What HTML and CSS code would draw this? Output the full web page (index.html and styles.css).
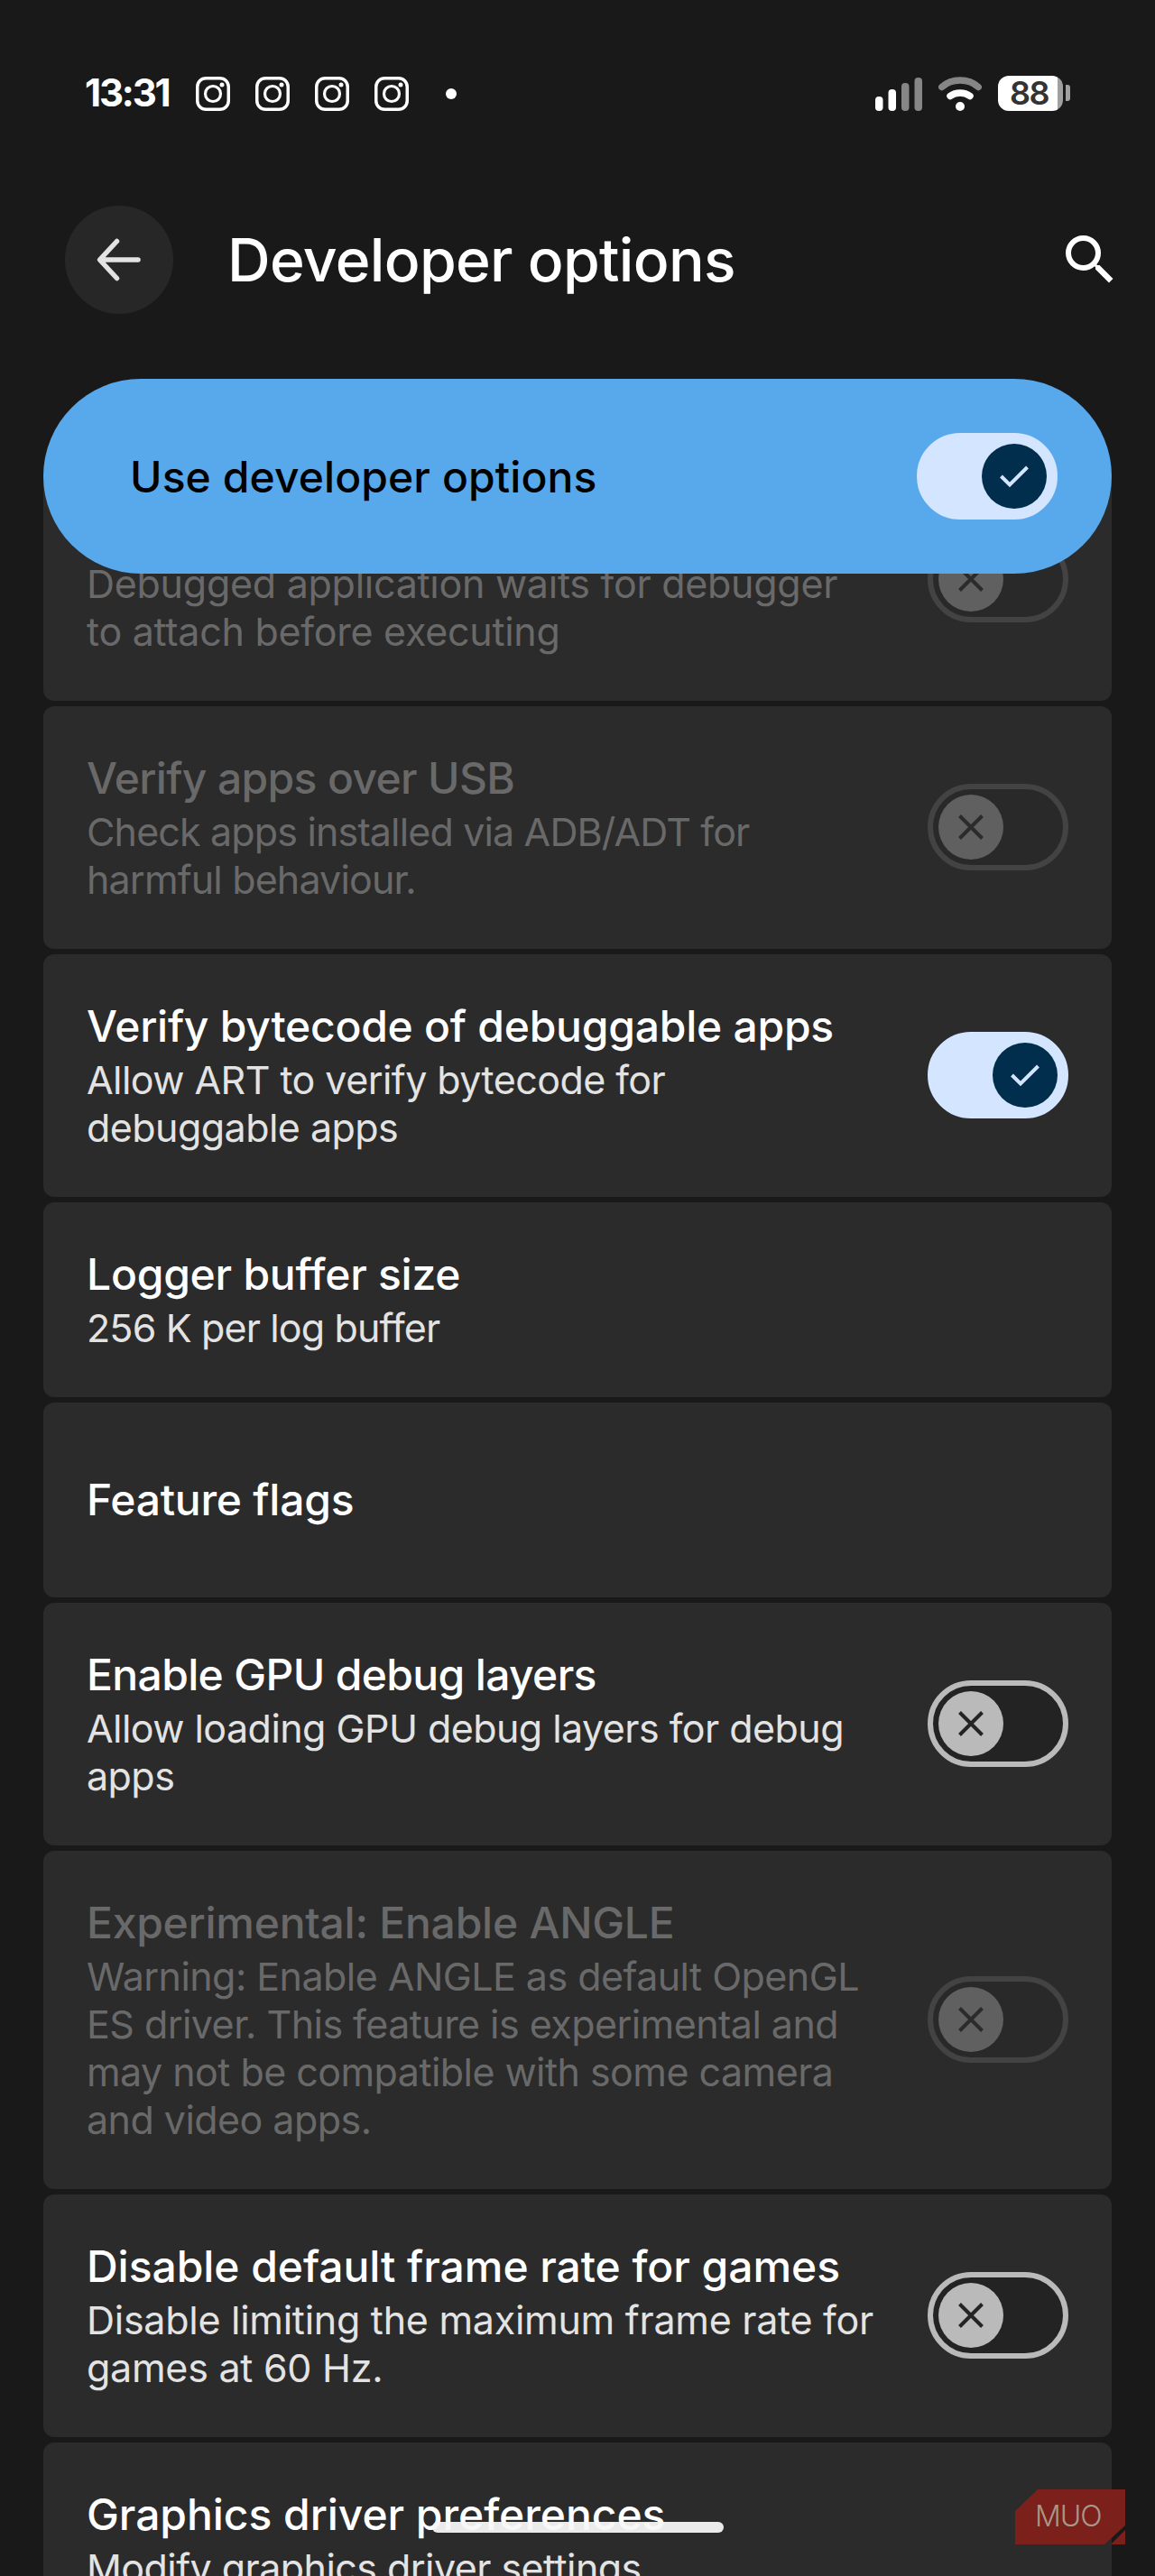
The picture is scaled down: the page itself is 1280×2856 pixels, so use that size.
FILE: index.html
```html
<!DOCTYPE html>
<html lang="en">
<head>
  <meta charset="UTF-8">
  <title>Developer options</title>
  <link rel="stylesheet" href="styles.css">
</head>
<body>

  <!-- shared icons -->
  <svg class="sprite" aria-hidden="true">
    <symbol id="insta" viewBox="0 0 38 38">
      <rect x="1.75" y="1.75" width="34.5" height="34.5" rx="9.5" fill="none" stroke="#fff" stroke-width="3.5"/>
      <circle cx="19" cy="19" r="8.5" fill="none" stroke="#fff" stroke-width="3.2"/>
      <circle cx="29" cy="9" r="2.5" fill="#fff"/>
    </symbol>
    <symbol id="check" viewBox="0 0 72 72">
      <path d="M21.5 36 31 45.5 50.5 26" fill="none" stroke="currentColor" stroke-width="4"/>
    </symbol>
    <symbol id="cross" viewBox="0 0 72 72">
      <path d="M23.5 23.5l25 25M48.5 23.5l-25 25" fill="none" stroke="currentColor" stroke-width="4"/>
    </symbol>
  </svg>

  <div class="status-bar">
    <span class="time">13:31</span>
    <div class="notifications">
      <svg class="insta"><use href="#insta"/></svg>
      <svg class="insta"><use href="#insta"/></svg>
      <svg class="insta"><use href="#insta"/></svg>
      <svg class="insta"><use href="#insta"/></svg>
      <span class="dot"></span>
    </div>
    <div class="system-icons">
      <svg class="signal" viewBox="0 0 52 38">
        <rect x="0" y="22" width="8.5" height="16" rx="4" fill="#fff"/>
        <rect x="14.5" y="14" width="8.5" height="24" rx="4" fill="#fff"/>
        <rect x="29" y="7" width="8.5" height="31" rx="4" fill="#868686"/>
        <rect x="43.5" y="1" width="8.5" height="37" rx="4" fill="#868686"/>
      </svg>
      <svg class="wifi" viewBox="0 0 48 38">
        <path d="M3.8 11.5C15 1.6 33 1.6 44.2 11.5" fill="none" stroke="#868686" stroke-width="7.5" stroke-linecap="round"/>
        <path d="M13 21.5C19 16.8 29 16.8 35 21.5" fill="none" stroke="#fff" stroke-width="7.5" stroke-linecap="round"/>
        <circle cx="24" cy="33" r="5" fill="#fff"/>
      </svg>
      <div class="battery">
        <span class="battery-level">88</span>
        <span class="battery-tip"></span>
      </div>
    </div>
  </div>

  <header class="app-bar">
    <button class="back-btn">
      <svg width="72" height="72" viewBox="0 0 72 72">
        <path d="M57 36H15M33.5 15.5 14.5 36 33.5 56.5" fill="none" stroke="#e3e3e3" stroke-width="5.5" stroke-linecap="round" stroke-linejoin="round"/>
      </svg>
    </button>
    <h1>Developer options</h1>
    <svg class="search" viewBox="0 0 24 24">
      <path fill="#fff" d="M15.5 14h-.79l-.28-.27A6.471 6.471 0 0 0 16 9.5 6.5 6.5 0 1 0 9.5 16c1.61 0 3.09-.59 4.23-1.57l.27.28v.79l5 4.99L20.49 19l-4.99-5zm-6 0C7.01 14 5 11.99 5 9.5S7.01 5 9.5 5 14 7.01 14 9.5 11.99 14 9.5 14z"/>
    </svg>
  </header>

  <div class="main-switch">
    <span>Use developer options</span>
    <div class="toggle on"><svg class="thumb"><use href="#check"/></svg></div>
  </div>

  <main class="list">
    <div class="item disabled">
      <div class="text">
        <h2>Wait for debugger</h2>
        <p class="loose">Debugged application waits for debugger<br>to attach before executing</p>
      </div>
      <div class="toggle"><svg class="thumb"><use href="#cross"/></svg></div>
    </div>

    <div class="item disabled">
      <div class="text">
        <h2 class="tight">Verify apps over USB</h2>
        <p class="tight">Check apps installed via ADB/ADT for<br>harmful behaviour.</p>
      </div>
      <div class="toggle"><svg class="thumb"><use href="#cross"/></svg></div>
    </div>

    <div class="item">
      <div class="text">
        <h2>Verify bytecode of debuggable apps</h2>
        <p>Allow ART to verify bytecode for<br>debuggable apps</p>
      </div>
      <div class="toggle on"><svg class="thumb"><use href="#check"/></svg></div>
    </div>

    <div class="item">
      <div class="text">
        <h2>Logger buffer size</h2>
        <p class="tight">256 K per log buffer</p>
      </div>
    </div>

    <div class="item">
      <div class="text">
        <h2>Feature flags</h2>
      </div>
    </div>

    <div class="item">
      <div class="text">
        <h2 class="tight">Enable GPU debug layers</h2>
        <p>Allow loading GPU debug layers for debug<br>apps</p>
      </div>
      <div class="toggle"><svg class="thumb"><use href="#cross"/></svg></div>
    </div>

    <div class="item disabled">
      <div class="text">
        <h2>Experimental: Enable ANGLE</h2>
        <p>Warning: Enable ANGLE as default OpenGL<br>ES driver. This feature is experimental and<br>may not be compatible with some camera<br>and video apps.</p>
      </div>
      <div class="toggle"><svg class="thumb"><use href="#cross"/></svg></div>
    </div>

    <div class="item">
      <div class="text">
        <h2 class="loose">Disable default frame rate for games</h2>
        <p class="loose">Disable limiting the maximum frame rate for<br>games at 60 Hz.</p>
      </div>
      <div class="toggle"><svg class="thumb"><use href="#cross"/></svg></div>
    </div>

    <div class="item">
      <div class="text">
        <h2 class="loose">Graphics driver preferences</h2>
        <p>Modify graphics driver settings</p>
      </div>
    </div>
  </main>

  <div class="home-bar"></div>

  <div class="watermark">
    <svg viewBox="0 0 122 61">
      <path d="M25 0H122V40L99 61H0V24z"/>
      <path d="M122 45V61H106z"/>
    </svg>
    <span>MUO</span>
  </div>

</body>
</html>
```
FILE: styles.css
```css
:root {
  --bg: #191919;
  --card: #2b2b2b;
  --fg: #ffffff;
  --fg-soft: #e3e3e3;
  --accent: #58a8ec;
  --on-track: #d3e5ff;
  --on-thumb: #012e4d;
  --off: #bababa;
}

* {
  box-sizing: border-box;
}

body {
  position: relative;
  width: 1280px;
  height: 2856px;
  margin: 0;
  overflow: hidden;
  background: var(--bg);
  color: var(--fg);
  font-family: Inter, Roboto, sans-serif;
}

h1, h2, p {
  margin: 0;
  white-space: nowrap;
}

.sprite {
  display: none;
}

/* status bar */
.status-bar {
  display: flex;
  align-items: center;
  height: 208px;
  padding: 0 94px;
}

.time {
  width: 123px;
  padding-bottom: 3px;
  font-size: 42px;
  font-weight: 700;
  letter-spacing: -2.2px;
}

.notifications {
  display: flex;
  align-items: center;
  gap: 28px;
}

.insta {
  width: 38px;
  height: 38px;
}

.dot {
  width: 12px;
  height: 12px;
  margin-left: 13px;
  border-radius: 50%;
  background: #fff;
}

.system-icons {
  display: flex;
  align-items: center;
  gap: 18px;
  margin-left: auto;
}

.signal {
  width: 52px;
  height: 38px;
}

.wifi {
  width: 48px;
  height: 38px;
}

.battery {
  display: flex;
  align-items: center;
  gap: 3px;
  margin-top: -2px;
}

.battery-level {
  width: 72px;
  height: 39px;
  padding-right: 3px;
  border-radius: 12px;
  background: linear-gradient(to right, #fff 66px, #a0a0a0 66px);
  color: #333;
  font-size: 36px;
  font-weight: 600;
  line-height: 39px;
  letter-spacing: -1.5px;
  text-align: center;
}

.battery-tip {
  width: 5px;
  height: 18px;
  border-radius: 0 3px 3px 0;
  background: #a0a0a0;
}

/* app bar */
.app-bar {
  display: flex;
  align-items: center;
  height: 160px;
  padding: 0 36px 0 72px;
}

.back-btn {
  display: flex;
  align-items: center;
  justify-content: center;
  width: 120px;
  height: 120px;
  padding: 0;
  border: none;
  border-radius: 50%;
  background: #272727;
}

.app-bar h1 {
  margin-left: 60px;
  font-size: 66px;
  font-weight: 500;
  letter-spacing: -0.7px;
}

.search {
  width: 72px;
  height: 72px;
  margin-left: auto;
}

/* main switch */
.main-switch {
  position: relative;
  z-index: 1;
  display: flex;
  align-items: center;
  justify-content: space-between;
  height: 216px;
  margin: 52px 48px -108px;
  padding: 0 60px 0 96px;
  border-radius: 108px;
  background: var(--accent);
  color: #000;
  font-size: 48px;
  font-weight: 550;
  letter-spacing: 0.1px;
}

/* preference list */
.list {
  display: flex;
  flex-direction: column;
  gap: 6px;
  height: 2328px;
  padding: 0 48px;
  overflow: hidden;
}

.item {
  display: flex;
  flex-shrink: 0;
  align-items: center;
  justify-content: space-between;
  min-height: 216px;
  padding: 50px 48px;
  border-radius: 12px;
  background: var(--card);
}

/* first row is scrolled half under the main switch */
.item:first-child {
  margin-top: -20px;
}

.item h2 {
  font-size: 48px;
  font-weight: 500;
  line-height: 60px;
  letter-spacing: -0.25px;
}

.item h2.tight {
  letter-spacing: -0.65px;
}

.item h2.loose {
  letter-spacing: -0.05px;
}

.item p {
  margin-top: 3px;
  color: var(--fg-soft);
  font-size: 43px;
  line-height: 53px;
  letter-spacing: -0.55px;
}

.item p.tight {
  letter-spacing: -0.85px;
}

.item p.loose {
  letter-spacing: -0.27px;
}

.item.disabled h2,
.item.disabled p {
  color: #696969;
}

/* toggles */
.toggle {
  flex-shrink: 0;
  width: 156px;
  height: 96px;
  padding: 6px;
  border: 6px solid var(--off);
  border-radius: 48px;
  background: #232323;
}

.item .toggle {
  margin-top: -1px;
}

.thumb {
  display: block;
  width: 72px;
  height: 72px;
  border-radius: 50%;
  background: var(--off);
  color: #232323;
}

.toggle.on {
  border-color: var(--on-track);
  background: var(--on-track);
}

.toggle.on .thumb {
  margin-left: auto;
  background: var(--on-thumb);
  color: var(--on-track);
}

.disabled .toggle {
  border-color: #434343;
  background: #292929;
}

.disabled .thumb {
  background: #606060;
  color: #2b2b2b;
}

/* overlays */
.home-bar {
  position: absolute;
  left: 479px;
  top: 2796px;
  width: 323px;
  height: 12px;
  border-radius: 6px;
  background: #f8f8f8;
  opacity: 0.94;
}

.watermark {
  position: absolute;
  right: 33px;
  bottom: 35px;
  width: 122px;
  height: 61px;
}

.watermark svg {
  display: block;
  width: 122px;
  height: 61px;
  fill: #7b201a;
}

.watermark span {
  position: absolute;
  left: 22px;
  top: 10px;
  color: #a8978a;
  font-size: 32px;
  font-weight: 300;
  line-height: 40px;
  letter-spacing: -1px;
}
```
